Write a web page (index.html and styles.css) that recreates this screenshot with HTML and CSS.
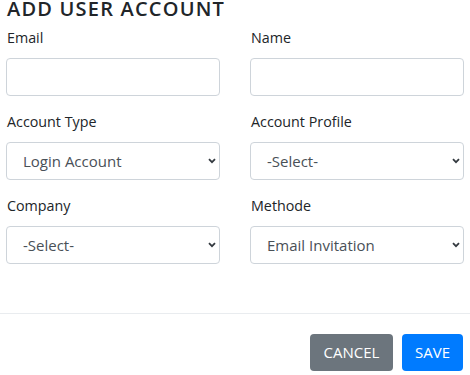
FILE: index.html
```html
<!DOCTYPE html>
<html lang="en">
<head>
<meta charset="utf-8">
<title>Add User Account</title>
<link rel="stylesheet" href="styles.css">
</head>
<body>
<div class="modal">
  <div class="modal-body">
    <h5 class="title">ADD USER ACCOUNT</h5>
    <div class="grid">
      <div class="group">
        <label class="label">Email</label>
        <input class="control" type="text">
      </div>
      <div class="group">
        <label class="label">Name</label>
        <input class="control" type="text">
      </div>
      <div class="group">
        <label class="label">Account Type</label>
        <div class="select-wrap">
          <select class="control select"><option>Login Account</option></select>
          <svg class="chev" width="8" height="6" viewBox="0 0 8 6"><path d="M1 1.2 L4 4.2 L7 1.2" fill="none" stroke="#343a40" stroke-width="1.8"/></svg>
        </div>
      </div>
      <div class="group">
        <label class="label">Account Profile</label>
        <div class="select-wrap">
          <select class="control select"><option>-Select-</option></select>
          <svg class="chev" width="8" height="6" viewBox="0 0 8 6"><path d="M1 1.2 L4 4.2 L7 1.2" fill="none" stroke="#343a40" stroke-width="1.8"/></svg>
        </div>
      </div>
      <div class="group">
        <label class="label">Company</label>
        <div class="select-wrap">
          <select class="control select"><option>-Select-</option></select>
          <svg class="chev" width="8" height="6" viewBox="0 0 8 6"><path d="M1 1.2 L4 4.2 L7 1.2" fill="none" stroke="#343a40" stroke-width="1.8"/></svg>
        </div>
      </div>
      <div class="group">
        <label class="label">Methode</label>
        <div class="select-wrap">
          <select class="control select"><option>Email Invitation</option></select>
          <svg class="chev" width="8" height="6" viewBox="0 0 8 6"><path d="M1 1.2 L4 4.2 L7 1.2" fill="none" stroke="#343a40" stroke-width="1.8"/></svg>
        </div>
      </div>
    </div>
  </div>
  <div class="modal-footer">
    <button class="btn btn-cancel" type="button">CANCEL</button>
    <button class="btn btn-save" type="button">SAVE</button>
  </div>
</div>
</body>
</html>
```

FILE: styles.css
```css
html, body {
  margin: 0;
  padding: 0;
  background: #fff;
}
body {
  font-family: "Open Sans", "Noto Sans", sans-serif;
  font-size: 15px;
  color: #212529;
  overflow: hidden;
  width: 470px;
  height: 375px;
}
.modal-body {
  display: flow-root;
  padding: 0 6px;
  height: 313px;
  box-sizing: border-box;
}
.title {
  margin: 0 0 9px 1px;
  font-size: 20px;
  font-weight: 600;
  letter-spacing: 1.2px;
  line-height: 17px;
  color: #212529;
}
.grid {
  display: grid;
  grid-template-columns: 214px 214px;
  column-gap: 30px;
}
.group {
  display: flex;
  flex-direction: column;
  margin-bottom: 14px;
}
.label {
  display: block;
  font-size: 14.3px;
  line-height: 24px;
  margin-bottom: 8px;
  padding-left: 1px;
}
.control {
  box-sizing: border-box;
  width: 100%;
  height: 38px;
  margin: 0;
  border: 1px solid #ced4da;
  border-radius: 4px;
  background: #fff;
  font-family: inherit;
  font-size: 15px;
  color: #495057;
  padding: 0 12px;
  outline: none;
}
.select-wrap {
  position: relative;
}
.select {
  appearance: none;
  -webkit-appearance: none;
  padding-left: 16px;
}
.chev {
  position: absolute;
  right: 4px;
  top: 16px;
  pointer-events: none;
}
.modal-footer {
  border-top: 1px solid #e9ecef;
  display: flex;
  justify-content: flex-end;
  gap: 9px;
  padding: 20px 7px 0 0;
}
.btn {
  height: 37px;
  border: none;
  border-radius: 4px;
  color: #fff;
  font-family: inherit;
  font-size: 15px;
  padding: 0 12px;
  line-height: 37px;
}
.btn-cancel {
  background: #6c757d;
  width: 83px;
}
.btn-save {
  background: #007bff;
  width: 61px;
}
```
